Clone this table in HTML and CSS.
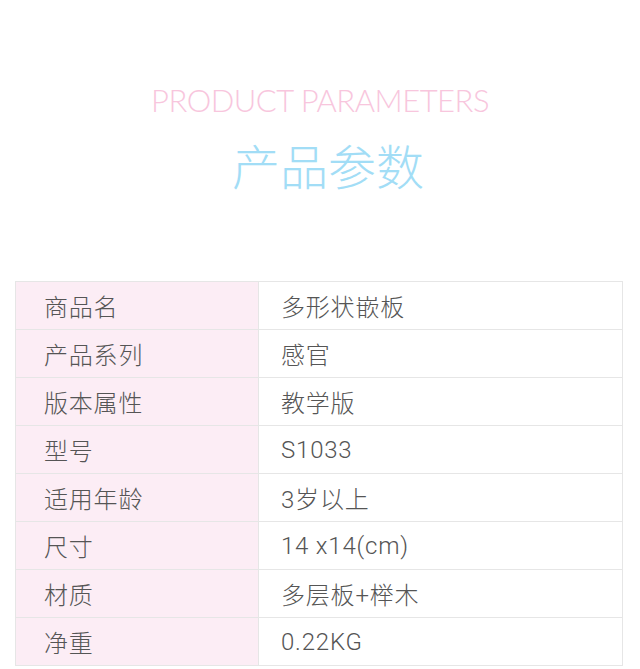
FILE: index.html
```html
<!DOCTYPE html>
<html lang="zh-CN">
<head>
<meta charset="utf-8">
<title>产品参数</title>
<link rel="stylesheet" href="styles.css">
</head>
<body>
<header class="heading">
  <div class="heading-en">PRODUCT PARAMETERS</div>
  <div class="heading-cn">产品参数</div>
</header>
<table class="params">
  <tr><th>商品名</th><td>多形状嵌板</td></tr>
  <tr><th>产品系列</th><td>感官</td></tr>
  <tr><th>版本属性</th><td>教学版</td></tr>
  <tr><th>型号</th><td>S1033</td></tr>
  <tr><th>适用年龄</th><td>3岁以上</td></tr>
  <tr><th>尺寸</th><td>14 x14(cm)</td></tr>
  <tr><th>材质</th><td>多层板+榉木</td></tr>
  <tr><th>净重</th><td>0.22KG</td></tr>
</table>
</body>
</html>
```
FILE: styles.css
```css
html, body {
  margin: 0;
  padding: 0;
  background: #ffffff;
}
body {
  width: 640px;
  font-family: Roboto, "Noto Sans CJK SC", sans-serif;
}
.heading {
  display: flex;
  flex-direction: column;
  align-items: center;
  padding-top: 80px;
  height: 201px;
  box-sizing: border-box;
}
.heading-en {
  font-family: Lato, "Liberation Sans", sans-serif;
  font-weight: 300;
  font-size: 31px;
  line-height: 40px;
  color: #f8c6dd;
  letter-spacing: -0.5px;
}
.heading-cn {
  font-family: "Noto Sans CJK SC", sans-serif;
  font-weight: 300;
  font-size: 48px;
  line-height: 60px;
  margin-top: 14px;
  margin-left: 16px;
  color: #a2ddf6;
}
.params {
  margin: 80px 0 0 15px;
  width: 608px;
  border-collapse: collapse;
  font-size: 24px;
  font-weight: 300;
  letter-spacing: 0.8px;
  color: #555555;
}
.params th, .params td {
  height: 47px;
  border: 1px solid #e6e6e6;
  text-align: left;
  font-weight: 300;
  padding: 0;
  vertical-align: middle;
}
.params th {
  width: 214px;
  padding-left: 28px;
  background: #fcedf5;
}
.params td {
  padding-left: 22px;
  background: #ffffff;
}
```
